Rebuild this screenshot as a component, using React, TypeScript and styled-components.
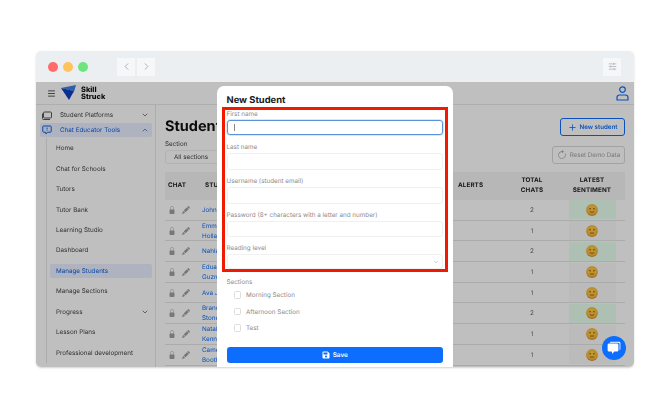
import React from "react";
import styled, { createGlobalStyle } from "styled-components";
import { BsLockFill, BsPencilFill, BsArrowClockwise } from "react-icons/bs";
import { FaSave } from "react-icons/fa";
import { ChevronDown, ChevronUp, ChevronLeft, ChevronRight, Plus, Menu, SlidersHorizontal } from "lucide-react";

const Global = createGlobalStyle`
  html, body { margin: 0; padding: 0; background: #fff; }
  body { font-family: Inter, "Liberation Sans", sans-serif; width: 670px; height: 418px; overflow: hidden; text-rendering: geometricPrecision; }
  * { box-sizing: border-box; }
`;

const Page = styled.div`
  padding: 51px 36px 0;
  filter: blur(0.35px);
  will-change: opacity;
`;
const Win = styled.div`
  width: 598px;
  height: 316px;
  border-radius: 5px;
  overflow: hidden;
  box-shadow: 0 1px 2px rgba(0, 0, 0, 0.18);
  display: flex;
  flex-direction: column;
`;
const TitleBar = styled.div`
  height: 31px;
  flex: none;
  background: #ebeff2;
  display: flex;
  align-items: center;
  padding: 0 13px 0 12px;
`;
const Light = styled.span<{ $c: string }>`
  width: 10px;
  height: 10px;
  border-radius: 50%;
  background: ${(p) => p.$c};
  margin-right: 5px;
`;
const NavBtn = styled.span<{ $last?: boolean }>`
  width: 18px;
  height: 18px;
  background: #f6f7f9;
  display: flex;
  align-items: center;
  justify-content: center;
  color: #a5aaaf;
  margin-right: ${(p) => (p.$last ? 0 : 2)}px;
`;
const NavGap = styled.span<{ $w: number | string }>`
  width: ${(p) => (typeof p.$w === "number" ? p.$w + "px" : p.$w)};
  flex: ${(p) => (typeof p.$w === "number" ? "none" : "1")};
`;
const Content = styled.div`
  position: relative;
  flex: 1;
  overflow: hidden;
  background: #fff;
  display: flex;
  flex-direction: column;
`;
const Header = styled.div`
  height: 23px;
  flex: none;
  border-bottom: 1px solid #e9e9e9;
  display: flex;
  align-items: center;
  padding: 0 5px 0 11px;
`;
const LogoWrap = styled.div`
  display: flex;
  align-items: center;
  margin-left: 5px;
  gap: 4px;
`;
const LogoText = styled.div`
  font-size: 7.4px;
  line-height: 7.2px;
  font-weight: 800;
  color: #111;
`;
const Spacer = styled.div`
  flex: 1;
`;
const Body = styled.div`
  flex: 1;
  display: flex;
  min-height: 0;
`;
const Side = styled.div`
  width: 120px;
  flex: none;
  border-right: 1px solid #e6e6e6;
  padding: 3px 3px 0 4px;
`;
const TopItem = styled.div<{ $on?: boolean }>`
  height: 14px;
  margin-bottom: 1px;
  border-radius: 2px;
  display: flex;
  align-items: center;
  padding: 0 3px 0 2px;
  gap: 8px;
  font-size: 6.3px;
  white-space: nowrap;
  color: ${(p) => (p.$on ? "#0d5fe0" : "#444")};
  background: ${(p) => (p.$on ? "#e8efff" : "transparent")};
`;
const SubList = styled.div`
  margin: 0 0 0 6px;
  border-left: 1px solid #e6e6e6;
  padding: 0 0 0 3px;
  display: flex;
  flex-direction: column;
`;
const SubItem = styled.div<{ $on?: boolean }>`
  height: 20.45px;
  flex: none;
  display: flex;
  align-items: center;
  justify-content: space-between;
  font-size: 6.3px;
  white-space: nowrap;
  color: ${(p) => (p.$on ? "#0d5fe0" : "#444")};
  padding: 0 3px 0 6px;
  position: relative;
  z-index: 0;
  &::before {
    content: "";
    display: ${(p) => (p.$on ? "block" : "none")};
    position: absolute;
    inset: 3.5px 0;
    background: #e8efff;
    border-radius: 2px;
    z-index: -1;
  }
`;
const Main = styled.div`
  flex: 1;
  min-width: 0;
  padding: 13px 9px 0 9px;
`;
const TitleRow = styled.div`
  height: 18px;
  display: flex;
  align-items: center;
  justify-content: space-between;
`;
const H1 = styled.div`
  font-size: 14.5px;
  font-weight: 700;
  color: #111;
  margin-top: -2px;
`;
const OutlineBtn = styled.div`
  width: 65px;
  height: 18px;
  border: 1px solid #0d6efd;
  border-radius: 3px;
  display: flex;
  align-items: center;
  justify-content: center;
  gap: 3px;
  color: #0d6efd;
  font-size: 6.2px;
  font-weight: 600;
`;
const FilterRow = styled.div`
  margin-top: 4px;
  display: flex;
  align-items: flex-end;
  justify-content: space-between;
`;
const SecLabel = styled.div`
  font-size: 6.3px;
  line-height: 9px;
  color: #444;
  margin-bottom: 1px;
`;
const SecSelect = styled.div`
  width: 150px;
  height: 14px;
  border: 1px solid #eee;
  border-radius: 3px;
  font-size: 6.3px;
  color: #444;
  padding-left: 8px;
  display: flex;
  align-items: center;
`;
const ResetBtn = styled.div`
  width: 73px;
  height: 18px;
  border: 1px solid #d8d8d8;
  border-radius: 3px;
  display: flex;
  align-items: center;
  justify-content: center;
  gap: 3px;
  color: #a0a0a0;
  font-size: 6.2px;
`;
const cols = "grid-template-columns: 37px 253px 50px 54px 66px;";
const THead = styled.div`
  margin-top: 8px;
  height: 28px;
  background: #f5f5f5;
  display: grid;
  ${cols}
  align-items: center;
  font-size: 6.3px;
  line-height: 9.7px;
  font-weight: 700;
  color: #222;
  letter-spacing: 0.1px;
`;
const Th = styled.div<{ $center?: boolean }>`
  text-align: ${(p) => (p.$center ? "center" : "left")};
  padding-left: ${(p) => (p.$center ? 0 : 3)}px;
`;
const Row = styled.div`
  height: 20.7px;
  display: grid;
  ${cols}
  align-items: center;
  border-bottom: 1px solid #e4e4e4;
  font-size: 6.3px;
  color: #666;
`;
const ChatCell = styled.div`
  display: flex;
  align-items: center;
  gap: 6px;
  padding-left: 3px;
  color: #a0a0a0;
`;
const Name = styled.div`
  color: #0d6efd;
  line-height: 10px;
  font-size: 6.3px;
`;
const NumCell = styled.div`
  text-align: center;
`;
const Sent = styled.div<{ $good?: boolean }>`
  width: 47px;
  height: 19px;
  margin: 0 auto;
  background: ${(p) => (p.$good ? "#e9ffef" : "#fafafa")};
  display: flex;
  align-items: center;
  justify-content: center;
`;
const Overlay = styled.div`
  position: absolute;
  inset: 0;
  background: rgba(0, 0, 0, 0.25);
`;
const Modal = styled.div`
  position: absolute;
  left: 181px;
  top: 4px;
  width: 236px;
  height: 290px;
  background: #fff;
  border-radius: 7px;
  padding: 8px 5.5px 0 5px;
`;
const ModalTitle = styled.div`
  font-size: 9.4px;
  line-height: 13px;
  font-weight: 700;
  color: #1a1a1a;
  padding-left: 4.5px;
`;
const RedBox = styled.div`
  border: 3px solid #f01a00;
  height: 165px;
  padding: 0 1.5px 0;
`;
const FieldLabel = styled.div`
  font-size: 6.3px;
  line-height: 8px;
  color: #8c8c8c;
  margin-bottom: 2px;
  white-space: nowrap;
`;
const Field = styled.div<{ $gap: number }>`
  margin-bottom: ${(p) => p.$gap}px;
`;
const Input = styled.div<{ $focus?: boolean; $h?: number }>`
  height: ${(p) => p.$h ?? 16.5}px;
  border-radius: 3px;
  border: 1px solid ${(p) => (p.$focus ? "#5b92d8" : "#f0f0f0")};
  box-shadow: ${(p) => (p.$focus ? "0 0 0 0.5px #b5cff0" : "none")};
  display: flex;
  align-items: center;
  justify-content: flex-end;
  padding: 0 3px 0 6px;
  color: #999;
`;
const Caret = styled.span`
  width: 1px;
  height: 7px;
  background: #888;
  margin-right: auto;
`;
const Below = styled.div`
  padding: 6px 4.5px 0;
`;
const SecTitle = styled.div`
  font-size: 6.3px;
  line-height: 9px;
  color: #8c8c8c;
`;
const CheckRow = styled.div`
  height: 16.4px;
  display: flex;
  align-items: center;
  padding-left: 7px;
  gap: 5px;
  font-size: 6.3px;
  color: #8c8c8c;
`;
const Box = styled.span`
  width: 7.5px;
  height: 7.5px;
  border: 1px solid #ddd;
  border-radius: 1.5px;
`;
const SaveBtn = styled.div`
  margin-top: 10.5px;
  height: 16.5px;
  border-radius: 3px;
  background: #0d6efd;
  color: #fff;
  display: flex;
  align-items: center;
  justify-content: center;
  gap: 3px;
  font-size: 6.4px;
  font-weight: 600;
`;
const ChatFab = styled.div`
  position: absolute;
  right: 8px;
  bottom: 7px;
  width: 24px;
  height: 24px;
  border-radius: 50%;
  background: #0d6efd;
  display: flex;
  align-items: center;
  justify-content: center;
`;

const Logo = () => (
  <svg width="16" height="16" viewBox="0 0 16 16">
    <path d="M0 3 L15 0 L13 6 Z" fill="#3f7fe0" />
    <path d="M0 3 L13 6 L8 15 Z" fill="#0b3fc0" />
    <path d="M13 6 L15 0 L11 9.5 Z" fill="#0d5fe0" />
  </svg>
);
const PlatformIcon = () => (
  <svg width="10" height="9" viewBox="0 0 10 9" fill="none" stroke="#555" strokeWidth="1">
    <rect x="1.5" y="1" width="8" height="6" rx="1" />
    <path d="M0.5 2.5 V7.5 Q0.5 8.5 1.5 8.5 H8" />
  </svg>
);
const ChatToolIcon = () => (
  <svg width="10" height="10" viewBox="0 0 10 10" fill="none" stroke="#0d5fe0" strokeWidth="1">
    <path d="M1.5 1 H8.5 Q9.2 1 9.2 1.7 V6.5 Q9.2 7.2 8.5 7.2 H5.5 L4 9 L3.6 7.2 H1.5 Q0.8 7.2 0.8 6.5 V1.7 Q0.8 1 1.5 1 Z" />
    <path d="M5 2.6 V4.4 M5 5.2 V5.9" />
  </svg>
);
const UserIcon = () => (
  <svg width="13" height="15" viewBox="0 0 13 15" fill="none" stroke="#0d6efd" strokeWidth="1.2">
    <circle cx="6.5" cy="3.6" r="2.8" />
    <path d="M1 14 V11.6 Q1 9 3.6 9 H9.4 Q12 9 12 11.6 V14 Z" strokeLinejoin="round" />
  </svg>
);
const Face = ({ smile }: { smile?: boolean }) => (
  <svg width="12" height="12" viewBox="0 0 12 12">
    <defs>
      <radialGradient id="fg" cx="50%" cy="40%" r="60%">
        <stop offset="0%" stopColor="#ffd24a" />
        <stop offset="75%" stopColor="#f6b73a" />
        <stop offset="100%" stopColor="#d98a25" />
      </radialGradient>
    </defs>
    <circle cx="6" cy="6" r="5.9" fill="url(#fg)" />
    <circle cx="4.1" cy="4.8" r="0.7" fill="#6b4510" />
    <circle cx="7.9" cy="4.8" r="0.7" fill="#6b4510" />
    {smile ? (
      <path d="M3.9 7.6 Q6 9 8.1 7.6" stroke="#6b4510" strokeWidth="0.7" fill="none" />
    ) : (
      <path d="M4 8 H8" stroke="#6b4510" strokeWidth="0.7" fill="none" />
    )}
  </svg>
);
const ChatBubbles = () => (
  <svg width="14" height="14" viewBox="0 0 14 14" fill="#fff">
    <path d="M3.5 0.8 H12 Q13.4 0.8 13.4 2.2 V8 Q13.4 9 12.6 9.2 V3.2 Q12.6 1.8 11.2 1.8 H3 Q3 0.8 3.5 0.8 Z" />
    <path d="M2 2.6 H10 Q11.4 2.6 11.4 4 V9.2 Q11.4 10.6 10 10.6 H7.2 L5.4 13 L4.8 10.6 H2 Q0.6 10.6 0.6 9.2 V4 Q0.6 2.6 2 2.6 Z" />
  </svg>
);

const subs = ["Home", "Chat for Schools", "Tutors", "Tutor Bank", "Learning Studio", "Dashboard", "Manage Students", "Manage Sections", "Progress", "Lesson Plans", "Professional development"];
const rows: { name: string; n: number; good?: boolean; smile?: boolean }[] = [
  { name: "John Smith", n: 2, good: true, smile: true },
  { name: "Emma Holland", n: 1 },
  { name: "Nahla Ali", n: 2, good: true, smile: true },
  { name: "Eduardo Guzman", n: 1 },
  { name: "Ava Jones", n: 1 },
  { name: "Brandon Stone", n: 2, good: true, smile: true },
  { name: "Natalie Kennedy", n: 1 },
  { name: "Cameron Booth", n: 1 },
];
const twoLine = (s: string) => (s.startsWith("John") || s.startsWith("Nahla") || s.startsWith("Ava") ? s : s.split(" ").map((w, i) => <div key={i}>{w}</div>));

export default function App() {
  return (
    <Page>
      <Global />
      <Win>
        <TitleBar>
          <Light $c="#ff6b6b" />
          <Light $c="#ffc35c" />
          <Light $c="#6fe57f" />
          <NavGap $w={24} />
          <NavBtn><ChevronLeft size={11} /></NavBtn>
          <NavBtn><ChevronRight size={11} /></NavBtn>
          <NavGap $w="fill" />
          <NavBtn $last><SlidersHorizontal size={9} /></NavBtn>
        </TitleBar>
        <Content>
          <Header>
            <Menu size={9} color="#222" strokeWidth={2} />
            <LogoWrap>
              <Logo />
              <LogoText>Skill<br />Struck</LogoText>
            </LogoWrap>
            <Spacer />
            <UserIcon />
          </Header>
          <Body>
            <Side>
              <TopItem>
                <PlatformIcon />
                <span>Student Platforms</span>
                <Spacer />
                <ChevronDown size={8} />
              </TopItem>
              <TopItem $on>
                <ChatToolIcon />
                <span>Chat Educator Tools</span>
                <Spacer />
                <ChevronUp size={8} />
              </TopItem>
              <SubList>
                {subs.map((s) => (
                  <SubItem key={s} $on={s === "Manage Students"}>
                    <span>{s}</span>
                    {s === "Progress" && <ChevronDown size={8} />}
                  </SubItem>
                ))}
              </SubList>
            </Side>
            <Main>
              <TitleRow>
                <H1>Students</H1>
                <OutlineBtn><Plus size={9} strokeWidth={2.2} />New student</OutlineBtn>
              </TitleRow>
              <FilterRow>
                <div>
                  <SecLabel>Section</SecLabel>
                  <SecSelect>All sections</SecSelect>
                </div>
                <ResetBtn><BsArrowClockwise size={10} />Reset Demo Data</ResetBtn>
              </FilterRow>
              <THead>
                <Th>CHAT</Th>
                <Th>STUDENT</Th>
                <Th>ALERTS</Th>
                <Th $center>TOTAL<br />CHATS</Th>
                <Th $center>LATEST<br />SENTIMENT</Th>
              </THead>
              {rows.map((r) => (
                <Row key={r.name}>
                  <ChatCell><BsLockFill size={8} /><BsPencilFill size={8} /></ChatCell>
                  <Name>{twoLine(r.name)}</Name>
                  <span />
                  <NumCell>{r.n}</NumCell>
                  <Sent $good={r.good}><Face smile={r.smile} /></Sent>
                </Row>
              ))}
            </Main>
          </Body>
          <Overlay />
          <Modal>
            <ModalTitle>New Student</ModalTitle>
            <RedBox>
              <Field $gap={8}><FieldLabel>First name</FieldLabel><Input $focus $h={15}><Caret /></Input></Field>
              <Field $gap={7.5}><FieldLabel>Last name</FieldLabel><Input /></Field>
              <Field $gap={7}><FieldLabel>Username (student email)</FieldLabel><Input /></Field>
              <Field $gap={7}><FieldLabel>Password (8+ characters with a letter and number)</FieldLabel><Input /></Field>
              <Field $gap={0}><FieldLabel>Reading level</FieldLabel><Input $h={15}><ChevronDown size={6} /></Input></Field>
            </RedBox>
            <Below>
              <SecTitle>Sections</SecTitle>
              <CheckRow><Box />Morning Section</CheckRow>
              <CheckRow><Box />Afternoon Section</CheckRow>
              <CheckRow><Box />Test</CheckRow>
              <SaveBtn><FaSave size={8} />Save</SaveBtn>
            </Below>
          </Modal>
          <ChatFab><ChatBubbles /></ChatFab>
        </Content>
      </Win>
    </Page>
  );
}
